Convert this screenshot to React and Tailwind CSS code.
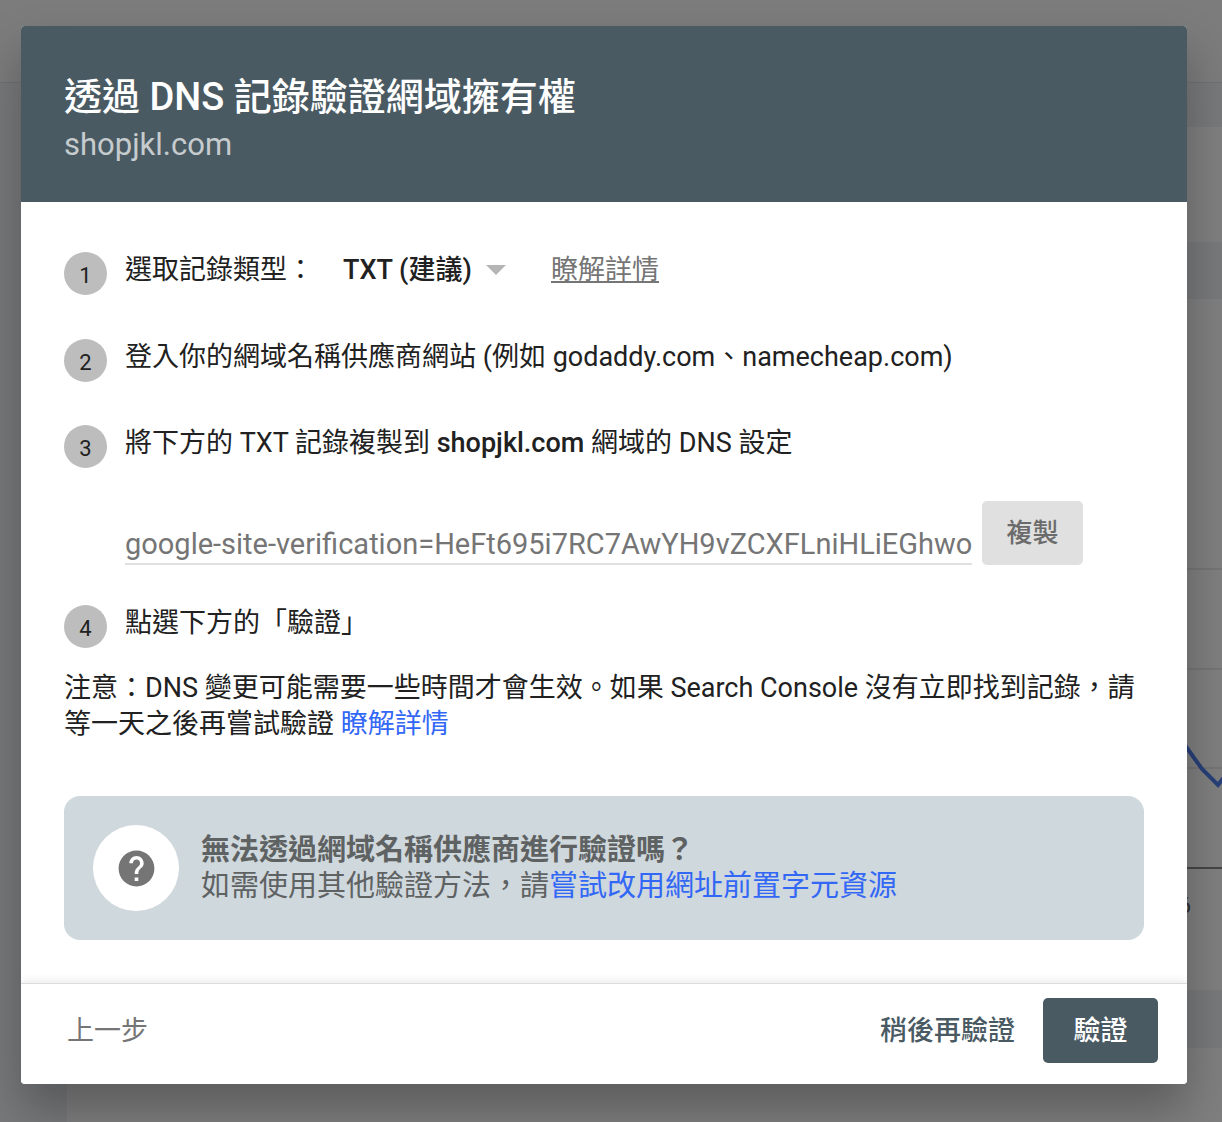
import { useState } from 'react';
import { MdHelp } from 'react-icons/md';

const Backdrop = () => (
  <div aria-hidden="true" className="absolute inset-0 flex flex-col overflow-hidden bg-[#f8f9fa]">
    <div className="h-[83px] shrink-0 border-b border-[#e0e2e5]" />
    <div className="flex grow">
      <div className="w-[67px] shrink-0 bg-[#f1f3f6]" />
      <div className="flex grow flex-col bg-[#f1f3f6]">
        <div className="mt-11 h-[115px] bg-white" />
        <div className="mt-[57px] flex h-[691px] justify-end bg-white">
          <svg width="80" height="691" viewBox="0 0 80 691" fill="none">
            <path d="M0 270h80M0 370h80M0 469h80" stroke="#ebebeb" strokeWidth="2" />
            <path d="M0 569h80" stroke="#8a8a8a" strokeWidth="2" />
            <path
              d="M30 428L45 449L60 470L76 486L90 468"
              stroke="#5080f0"
              strokeWidth="4"
              strokeLinejoin="miter"
            />
            <text
              x="49"
              y="614"
              textAnchor="end"
              fill="#5f6368"
              fontFamily="Roboto, sans-serif"
              fontSize="22"
            >
              5/6
            </text>
          </svg>
        </div>
        <div className="mt-[58px] grow bg-white" />
      </div>
    </div>
    <div className="absolute inset-0 bg-black/50" />
  </div>
);

const Step = ({ number, children }) => (
  <li className="flex items-start gap-[18px]">
    <span className="flex size-[43px] shrink-0 items-center justify-center rounded-full bg-[#bdbdbd] pt-1 text-[22px] leading-6">
      {number}
    </span>
    <div className="min-w-0 grow">{children}</div>
  </li>
);

const Header = ({ domain }) => (
  <header className="rounded-t bg-[#4a5a63] px-[43px] pt-12 pb-8">
    <h1 id="dialog-title" className="text-[38px] leading-[46px] font-medium text-white">
      透過 DNS 記錄驗證網域擁有權
    </h1>
    <p className="text-[31px] leading-[50px] text-white/70">{domain}</p>
  </header>
);

const RecordType = () => {
  const [type, setType] = useState('txt');

  return (
    <div className="flex items-center">
      <label htmlFor="record-type" className="w-[218px]">
        選取記錄類型：
      </label>
      <div className="grid items-center">
        <select
          id="record-type"
          value={type}
          onChange={(e) => setType(e.target.value)}
          className="col-start-1 row-start-1 h-9 w-[163px] appearance-none bg-transparent font-medium"
        >
          <option value="txt">TXT (建議)</option>
          <option value="cname">CNAME</option>
        </select>
        <svg
          className="pointer-events-none col-start-1 row-start-1 h-2.5 w-5 justify-self-end"
          viewBox="0 0 20 10"
        >
          <path d="M0 0h20L10 10z" fill="#b5b5b5" />
        </svg>
      </div>
      <a href="#record-types" className="ml-[45px] text-[#757575] underline">
        瞭解詳情
      </a>
    </div>
  );
};

const CopyRecord = ({ value }) => (
  <div className="mt-10 flex items-end gap-2.5">
    <input
      type="text"
      readOnly
      value={value}
      aria-label="TXT 記錄"
      className="h-10 w-[847px] min-w-0 border-b-2 border-[#e0e0e0] text-[29px] text-[#757575] outline-none"
    />
    <button
      type="button"
      onClick={() => navigator.clipboard?.writeText(value)}
      className="h-16 w-[101px] shrink-0 rounded-[5px] bg-[#e0e0e0] text-[26px] font-medium text-[#6b6b6b]"
    >
      複製
    </button>
  </div>
);

const HelpBox = () => (
  <section className="mt-[54px] flex items-center gap-[22px] rounded-2xl bg-[#cfd8dc] p-[29px] text-[29px]">
    <span className="flex size-[86px] shrink-0 items-center justify-center rounded-full bg-white">
      <MdHelp size={43} color="#757575" />
    </span>
    <div className="text-[#5f6263]">
      <h2 className="font-bold">無法透過網域名稱供應商進行驗證嗎？</h2>
      <p>
        如需使用其他驗證方法，請
        <a href="#url-prefix" className="text-[#3367f6]">
          嘗試改用網址前置字元資源
        </a>
      </p>
    </div>
  </section>
);

const Footer = () => (
  <footer className="flex items-center rounded-b border-t border-[#dcdcdc] bg-white pt-3.5 pr-[29px] pb-[21px] pl-[46px] shadow-[0_0_12px_rgba(0,0,0,0.12)] [clip-path:inset(-16px_0_0_0)]">
    <button type="button" className="text-[#757575]">
      上一步
    </button>
    <button type="button" className="ml-auto font-medium text-[#4a5a63]">
      稍後再驗證
    </button>
    <button
      type="button"
      className="ml-7 h-[65px] w-[115px] rounded-[5px] bg-[#4a5a63] font-medium text-white"
    >
      驗證
    </button>
  </footer>
);

export default function App() {
  const domain = 'shopjkl.com';

  return (
    <div
      lang="zh-Hant"
      className="relative min-h-screen overflow-hidden pt-[26px] pr-[35px] pb-[38px] pl-[21px] font-[Roboto,'Noto_Sans_CJK_TC',sans-serif] text-[27px] leading-9 text-[#212121]"
    >
      <Backdrop />
      <main
        role="dialog"
        aria-labelledby="dialog-title"
        className="relative rounded bg-white shadow-[0_26px_48px_0_rgba(0,0,0,0.28)]"
      >
        <Header domain={domain} />
        <div className="px-[43px] pt-[50px] pb-[43px]">
          <ol>
            <Step number={1}>
              <RecordType />
            </Step>
            <li aria-hidden="true" className="h-11" />
            <Step number={2}>登入你的網域名稱供應商網站 (例如 godaddy.com、namecheap.com)</Step>
            <li aria-hidden="true" className="h-[43px]" />
            <Step number={3}>
              <p>
                將下方的 TXT 記錄複製到 <b className="font-medium">{domain}</b> 網域的 DNS 設定
              </p>
              <CopyRecord value="google-site-verification=HeFt695i7RC7AwYH9vZCXFLniHLiEGhwo" />
            </Step>
            <li aria-hidden="true" className="h-10" />
            <Step number={4}>點選下方的「驗證」</Step>
          </ol>
          <p className="mt-[22px]">
            注意：DNS 變更可能需要一些時間才會生效。如果 Search Console
            沒有立即找到記錄，請等一天之後再嘗試驗證{' '}
            <a href="#dns-help" className="inline-block text-[#3367f6]">
              瞭解詳情
            </a>
          </p>
          <HelpBox />
        </div>
        <Footer />
      </main>
    </div>
  );
}
